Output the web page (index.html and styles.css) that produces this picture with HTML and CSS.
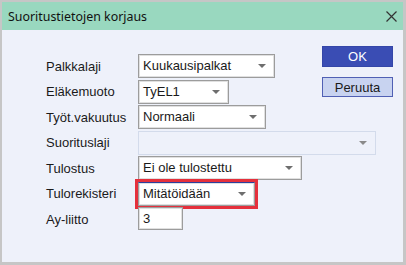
FILE: index.html
```html
<!DOCTYPE html>
<html lang="fi">
<head>
  <meta charset="UTF-8">
  <title>Suoritustietojen korjaus</title>
  <link rel="stylesheet" href="styles.css">
</head>
<body>
  <div class="dialog">
    <div class="titlebar">
      <span class="title">Suoritustietojen korjaus</span>
      <svg class="close" width="11" height="11" viewBox="0 0 11 11">
        <path d="M0.5 0.5 L10.5 10.5 M10.5 0.5 L0.5 10.5" stroke="#333" stroke-width="1.2" fill="none"/>
      </svg>
    </div>

    <div class="content">
      <div class="buttons">
        <button class="btn btn-ok">OK</button>
        <button class="btn btn-cancel">Peruuta</button>
      </div>

      <label class="lbl">Palkkalaji</label>
      <div class="field sel w-palkka">Kuukausipalkat</div>

      <label class="lbl">Eläkemuoto</label>
      <div class="field sel w-elake">TyEL1</div>

      <label class="lbl">Työt.vakuutus</label>
      <div class="field sel w-tyot">Normaali</div>

      <label class="lbl">Suorituslaji</label>
      <div class="field sel w-suor disabled"></div>

      <label class="lbl">Tulostus</label>
      <div class="field sel w-tulostus">Ei ole tulostettu</div>

      <label class="lbl">Tulorekisteri</label>
      <div class="field sel w-tulorek focus">Mitätöidään</div>

      <label class="lbl">Ay-liitto</label>
      <div class="field w-ay">3</div>
    </div>
  </div>
</body>
</html>
```

FILE: styles.css
```css
html, body {
  margin: 0;
  padding: 0;
}

body {
  width: 406px;
  height: 265px;
  background-color: #c6c6c6;
  font-family: "Liberation Sans", Arial, sans-serif;
  font-size: 13px;
  color: #1a1a1a;
}

.dialog {
  box-sizing: border-box;
  width: 406px;
  height: 265px;
  padding: 2px 3px 3px 2px;
  display: flex;
  flex-direction: column;
}

.titlebar {
  height: 28px;
  background-color: #99d8bf;
  display: flex;
  align-items: center;
  justify-content: space-between;
  padding: 0 6px 0 6px;
}

.title {
  font-family: "Noto Sans", "Open Sans", sans-serif;
  font-size: 12.4px;
  color: #111;
}

.close {
  display: block;
}

.content {
  flex: 1;
  background-color: #eef1fa;
  display: grid;
  grid-template-columns: 92px 184px 71px;
  grid-auto-rows: 24px;
  row-gap: 1.5px;
  padding: 24px 0 0 44px;
  align-content: start;
}

.lbl {
  grid-column: 1;
  align-self: center;
  white-space: nowrap;
}

.field {
  grid-column: 2;
  box-sizing: border-box;
  height: 24px;
  background: #fff;
  border: 1px solid #9c9c9c;
  box-shadow: inset 0 0 0 1px #e0e0e0;
  padding: 0 4px;
  line-height: 22px;
  white-space: nowrap;
  position: relative;
}

.sel::after {
  content: "";
  position: absolute;
  right: 8px;
  top: 9px;
  border-left: 4px solid transparent;
  border-right: 4px solid transparent;
  border-top: 4px solid #6e6e6e;
}

.w-palkka { width: 137px; }
.w-elake { width: 91px; }
.w-tyot { width: 128px; }
.w-suor { width: 238px; grid-column: 2 / 4; }
.w-tulostus { width: 164px; }
.w-tulorek { width: 117px; }
.w-ay { width: 45px; height: 23px; }

.disabled {
  background: #eef1fa;
  border-color: #d3dbeb;
  box-shadow: none;
}

.disabled::after {
  border-top-color: #8a8a8a;
}

.focus {
  border-top: 1px solid #2b3f9e;
  outline: 3px solid #e5303c;
}

.buttons {
  grid-column: 3;
  grid-row: 1 / 4;
  margin-top: -8px;
  display: flex;
  flex-direction: column;
  gap: 10px;
}

.btn {
  width: 71px;
  height: 21px;
  padding: 0;
  font-family: "Liberation Sans", Arial, sans-serif;
  font-size: 13px;
  border: 1px solid #5060b4;
}

.btn-ok {
  background-color: #3a4db4;
  border-color: #3446a8;
  color: #fff;
}

.btn-cancel {
  height: 20px;
  background-color: #c8d3f0;
  color: #1a1a1a;
}
```
